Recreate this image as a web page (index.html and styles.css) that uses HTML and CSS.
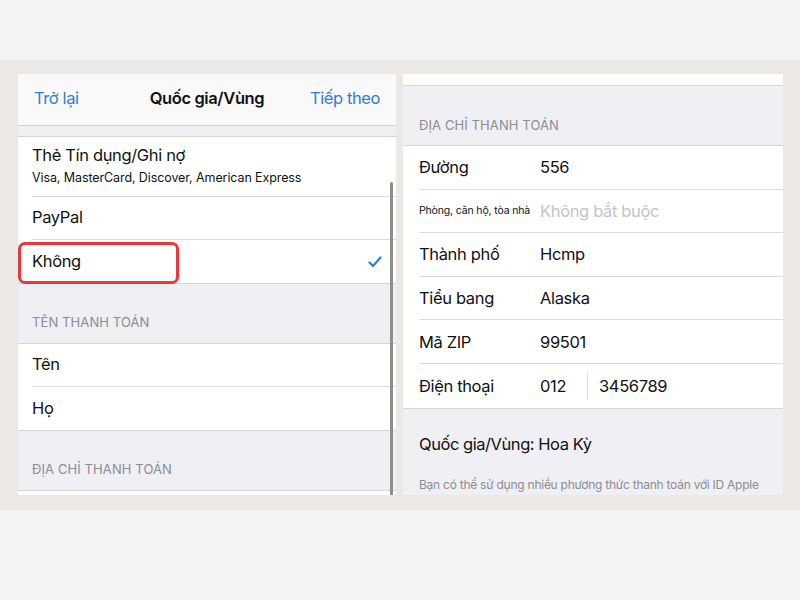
FILE: index.html
```html
<!DOCTYPE html>
<html lang="vi">
<head>
<meta charset="utf-8">
<link rel="stylesheet" href="styles.css">
</head>
<body>
<div class="top"></div>
<div class="stage">
  <div class="panel left">
    <div class="nav">
      <span class="nav-link back">Trở lại</span>
      <span class="nav-title">Quốc gia/Vùng</span>
      <span class="nav-link next">Tiếp theo</span>
    </div>
    <div class="gap-strip"></div>
    <div class="group">
      <div class="row tall">
        <div class="row-main">Thẻ Tín dụng/Ghi nợ</div>
        <div class="row-sub">Visa, MasterCard, Discover, American Express</div>
      </div>
      <div class="row">PayPal</div>
      <div class="row last selected">
        <span>Không</span>
        <svg class="check" width="14" height="12" viewBox="0 0 14 12"><path d="M1.5 6.5 L5 10 L12.5 1.5" fill="none" stroke="#2f7ed8" stroke-width="2.2" stroke-linecap="round" stroke-linejoin="round"/></svg>
        <span class="highlight"></span>
      </div>
    </div>
    <div class="section"><span>TÊN THANH TOÁN</span></div>
    <div class="group">
      <div class="row">Tên</div>
      <div class="row last">Họ</div>
    </div>
    <div class="section"><span>ĐỊA CHỈ THANH TOÁN</span></div>
    <div class="group stub"></div>
    <span class="scrollbar"></span>
  </div>
  <div class="panel right">
    <div class="white-strip"></div>
    <div class="section big"><span>ĐỊA CHỈ THANH TOÁN</span></div>
    <div class="group">
      <div class="field"><span class="label">Đường</span><span class="value">556</span></div>
      <div class="field"><span class="label small">Phòng, căn hộ, tòa nhà</span><span class="value placeholder">Không bắt buộc</span></div>
      <div class="field"><span class="label">Thành phố</span><span class="value">Hcmp</span></div>
      <div class="field"><span class="label">Tiểu bang</span><span class="value">Alaska</span></div>
      <div class="field"><span class="label">Mã ZIP</span><span class="value">99501</span></div>
      <div class="field last"><span class="label">Điện thoại</span><span class="value code">012</span><span class="value phone">3456789</span></div>
    </div>
    <div class="footer">
      <div class="country">Quốc gia/Vùng: Hoa Kỳ</div>
      <div class="note">Bạn có thể sử dụng nhiều phương thức thanh toán với ID Apple</div>
    </div>
  </div>
</div>
</body>
</html>
```

FILE: styles.css
```css
* { box-sizing: border-box; }
html, body { margin: 0; padding: 0; }
body {
  width: 800px;
  height: 600px;
  background: #f4f4f4;
  font-family: Inter, "Noto Sans", sans-serif;
  color: #111;
  overflow: hidden;
}
.top { height: 60px; }
.stage {
  height: 450px;
  background: #ebe8e6;
  display: flex;
  gap: 7px;
  padding: 14px 0 0 18px;
}
.panel {
  position: relative;
  height: 421px;
  background: #efeff4;
  overflow: hidden;
}
.left { width: 378px; }
.right { width: 380px; }

.nav {
  height: 52px;
  background: #f9f9f9;
  border-bottom: 1px solid #d2d2d6;
  display: grid;
  grid-template-columns: 1fr auto 1fr;
  align-items: center;
  padding: 0 16px 3px 16px;
  font-size: 16.5px;
  letter-spacing: -0.4px;
}
.nav-link { color: #2f7ed8; }
.back { justify-self: start; }
.next { justify-self: end; }
.nav-title { font-weight: 600; color: #111; }
.gap-strip { height: 10px; }

.group {
  background: #fff;
  border-top: 1px solid #d6d6da;
  border-bottom: 1px solid #d6d6da;
}
.row {
  position: relative;
  height: 43px;
  margin-left: 14px;
  border-bottom: 1px solid #dcdce0;
  display: flex;
  align-items: center;
  padding-bottom: 2px;
  font-size: 16.5px;
  letter-spacing: -0.35px;
}
.row.last { border-bottom: none; }
.row.tall {
  height: 60px;
  flex-direction: column;
  align-items: flex-start;
  justify-content: center;
  gap: 5px;
  padding-bottom: 4px;
}
.row-sub { font-size: 12.5px; color: #111; letter-spacing: -0.1px; }
.selected { justify-content: space-between; padding-right: 14px; }
.check { display: block; margin-top: 2px; }
.highlight {
  position: absolute;
  left: -14px;
  top: 2px;
  width: 161px;
  height: 42px;
  border: 3px solid #e5393b;
  border-radius: 7px;
}

.section {
  height: 59px;
  display: flex;
  align-items: flex-end;
  padding: 0 0 13px 14px;
  font-size: 13px;
  color: #8c8c92;
  letter-spacing: 0.1px;
}
.section.big { padding-left: 16px; padding-bottom: 12px; }
.stub { height: 8px; border-bottom: none; }

.scrollbar {
  position: absolute;
  left: 372px;
  top: 108px;
  width: 3px;
  height: 320px;
  background: #8e8e8e;
  border-radius: 2px;
}

.white-strip {
  height: 12px;
  background: #fff;
  border-bottom: 1px solid #d6d6da;
}
.field {
  height: 43.6px;
  margin-left: 16px;
  border-bottom: 1px solid #dcdce0;
  display: flex;
  align-items: center;
  font-size: 16.5px;
  letter-spacing: -0.35px;
}
.field.last { border-bottom: none; }
.label { width: 121px; flex-shrink: 0; }
.label.small { font-size: 10.5px; letter-spacing: -0.15px; }
.placeholder { color: #c4c4c9; }
.code {
  width: 48px;
  height: 28px;
  display: flex;
  align-items: center;
  border-right: 1px solid #e0e0e4;
}
.phone { padding-left: 11px; }
.footer { padding: 25px 16px 0 16px; }
.country { font-size: 16.5px; color: #111; letter-spacing: -0.45px; }
.note {
  margin-top: 24px;
  font-size: 12px;
  line-height: 13px;
  color: #8c8c92;
  white-space: nowrap;
  letter-spacing: -0.25px;
}
```
